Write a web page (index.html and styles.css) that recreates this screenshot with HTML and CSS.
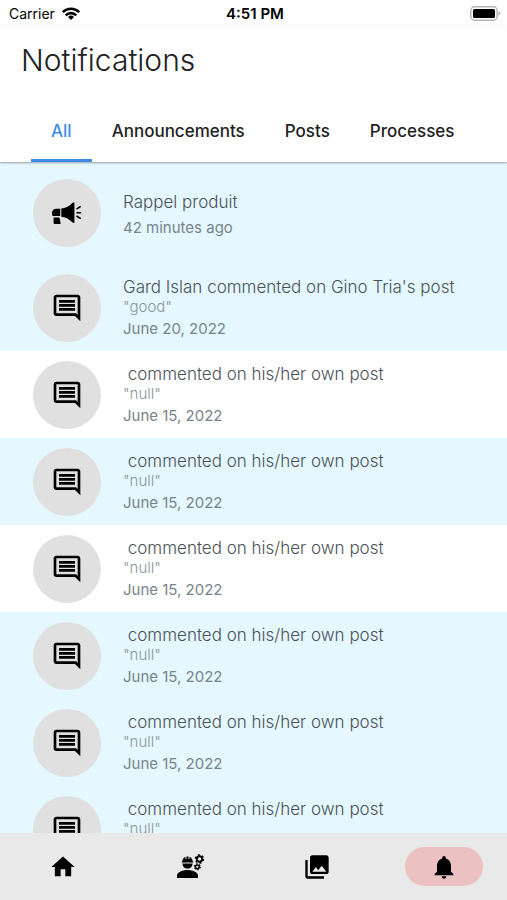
FILE: index.html
```html
<!DOCTYPE html>
<html lang="en">
<head>
<meta charset="utf-8">
<meta name="viewport" content="width=device-width, initial-scale=1">
<title>Notifications</title>
<link rel="stylesheet" href="styles.css">
</head>
<body>
<svg class="sprite" aria-hidden="true">
  <symbol id="comment" viewBox="0 0 24 24">
    <path d="M21.99 4c0-1.100-.89-2-1.990-2H4c-1.100 0-2 .9-2 2v12c0 1.100.9 2 2 2h14l4 4-.01-18zM20 4v13.170L18.830 16H4V4h16zM6 12h12v2H6zm0-3h12v2H6zm0-3h12v2H6z"/>
  </symbol>
</svg>
<div class="status">
  <div class="status-side">
    <span>Carrier</span>
    <svg class="wifi" viewBox="0 0 18 13" aria-hidden="true">
      <g fill="none" stroke="#000" stroke-width="2.600"><path d="M.8 5.200a11.600 11.600 0 0 1 16.400 0"/><path d="M3.700 8.300a7.500 7.500 0 0 1 10.600 0"/></g>
      <path d="M9 13 6 10a4.300 4.300 0 0 1 6 0z"/>
    </svg>
  </div>
  <span class="time">4:51 PM</span>
  <div class="status-side status-end">
    <svg class="battery" viewBox="0 0 31 15" aria-hidden="true">
      <rect x=".8" y=".8" width="26.400" height="13.400" rx="4" fill="#fff" stroke="#b5b5b5" stroke-width="1.500"/>
      <rect x="3" y="3" width="22" height="9" rx="1.500"/>
      <path d="M28.500 5.500q2 .5 2 2t-2 2z" fill="#b5b5b5"/>
    </svg>
  </div>
</div>
<header class="header">
  <h1>Notifications</h1>
  <div class="tabs" role="tablist">
    <button class="tab active" role="tab" aria-selected="true">All</button>
    <button class="tab" role="tab" aria-selected="false">Announcements</button>
    <button class="tab" role="tab" aria-selected="false">Posts</button>
    <button class="tab" role="tab" aria-selected="false">Processes</button>
  </div>
</header>
<main class="list">
  <article class="item unread announcement">
    <div class="avatar"><svg class="megaphone" viewBox="0 0 30 24" aria-hidden="true">
      <path d="M8.200 7.700v7.200H1.300C.5 14.900 0 14.300 0 13.500v-1.600c0-2.500 1.700-4.200 4.200-4.200zM9.300 7.600c4-.4 7.500-2 10.700-5.400q.4-.7 1.300-.7h1.100v20.200h-1.100q-.9 0-1.300-.7c-3.200-3.300-6.700-4.900-10.700-5.300zM1.600 16.500h5.200c.5 0 .8.4.9.9l1 5.600H2.900c-.8 0-1.300-.5-1.300-1.300z"/>
      <path d="m24.500 8.200 4.200-2.800M24.500 11.700h4.700M24.500 15l4.200 2.700" fill="none" stroke="#000" stroke-width="1.600"/>
    </svg></div>
    <div class="text"><h2>Rappel produit</h2><time>42 minutes ago</time></div>
  </article>
  <article class="item unread">
    <div class="avatar"><svg class="comment"><use href="#comment"/></svg></div>
    <div class="text"><h2>Gard Islan commented on Gino Tria's post</h2><p>"good"</p><time>June 20, 2022</time></div>
  </article>
  <article class="item">
    <div class="avatar"><svg class="comment"><use href="#comment"/></svg></div>
    <div class="text"><h2> commented on his/her own post</h2><p>"null"</p><time>June 15, 2022</time></div>
  </article>
  <article class="item unread">
    <div class="avatar"><svg class="comment"><use href="#comment"/></svg></div>
    <div class="text"><h2> commented on his/her own post</h2><p>"null"</p><time>June 15, 2022</time></div>
  </article>
  <article class="item">
    <div class="avatar"><svg class="comment"><use href="#comment"/></svg></div>
    <div class="text"><h2> commented on his/her own post</h2><p>"null"</p><time>June 15, 2022</time></div>
  </article>
  <article class="item unread">
    <div class="avatar"><svg class="comment"><use href="#comment"/></svg></div>
    <div class="text"><h2> commented on his/her own post</h2><p>"null"</p><time>June 15, 2022</time></div>
  </article>
  <article class="item unread">
    <div class="avatar"><svg class="comment"><use href="#comment"/></svg></div>
    <div class="text"><h2> commented on his/her own post</h2><p>"null"</p><time>June 15, 2022</time></div>
  </article>
  <article class="item unread">
    <div class="avatar"><svg class="comment"><use href="#comment"/></svg></div>
    <div class="text"><h2> commented on his/her own post</h2><p>"null"</p></div>
  </article>
</main>
<nav class="nav">
  <a href="#home" aria-label="Home"><svg class="nav-icon" viewBox="0 0 24 24"><path d="M10 20v-6h4v6h5v-8h3L12 3 2 12h3v8z"/></svg></a>
  <a href="#team" aria-label="Team"><svg class="nav-icon" viewBox="0 0 28 28">
    <path d="M1 25v-2.500c0-3.300 6-5.500 10.500-5.500S22 19.200 22 22.500V25zM6.500 10.500h10c0 3-2 5-5 5s-5-2-5-5zM5.700 9.500V8.600h.6c.1-2.200 1.300-4 3.200-4.800V6h1V3.400h2V6h1V3.800c1.900.8 3.100 2.600 3.200 4.800h.6v.9z"/>
    <g fill="none" stroke="#000"><circle cx="23.500" cy="6" r="2.700" stroke-width="1.900"/><circle cx="23.500" cy="6" r="4" stroke-width="1.500" stroke-dasharray="2 2.190"/><circle cx="21.300" cy="13.800" r="1.900" stroke-width="1.500"/><circle cx="21.300" cy="13.800" r="2.900" stroke-width="1.200" stroke-dasharray="1.500 1.540"/></g>
  </svg></a>
  <a href="#gallery" aria-label="Gallery"><svg class="nav-icon" viewBox="0 0 24 24"><path d="M22 16V4c0-1.100-.9-2-2-2H8c-1.100 0-2 .9-2 2v12c0 1.100.9 2 2 2h12c1.100 0 2-.9 2-2zm-11-4 2.030 2.710L16 11l4 5H8zM2 6v14c0 1.100.9 2 2 2h14v-2H4V6z"/></svg></a>
  <a href="#notifications" aria-label="Notifications" aria-current="page"><span class="pill"><svg class="nav-icon" viewBox="0 0 24 24"><path d="M12 22c1.100 0 2-.9 2-2h-4c0 1.100.9 2 2 2zm6-6v-5c0-3.070-1.630-5.640-4.500-6.320V4c0-.83-.67-1.500-1.500-1.500s-1.500.67-1.500 1.500v.68C7.640 5.360 6 7.920 6 11v5l-2 2v1h16v-1z"/></svg></span></a>
</nav>
</body>
</html>
```
FILE: styles.css
```css
* {
  box-sizing: border-box;
}

body {
  margin: 0;
  height: 100vh;
  display: flex;
  flex-direction: column;
  overflow: hidden;
  background: #fff;
  color: #222;
  font-family: Inter, "Liberation Sans", sans-serif;
}

h1,
h2,
p {
  margin: 0;
}

svg {
  display: block;
}

.sprite {
  position: absolute;
  width: 0;
  height: 0;
}

.status {
  display: flex;
  align-items: center;
  height: 26px;
  padding: 0 6px 0 9px;
  color: #000;
  font-size: 14px;
}

.status-side {
  flex: 1;
  display: flex;
  align-items: center;
  gap: 7px;
}

.status-end {
  justify-content: flex-end;
}

.time {
  font-size: 15px;
  font-weight: 600;
}

.wifi {
  width: 18px;
  height: 13px;
}

.battery {
  width: 31px;
  height: 15px;
}

.header {
  position: relative;
  z-index: 1;
  background: #fff;
  box-shadow: 0 1px 2px rgba(0, 0, 0, 0.35);
}

h1 {
  padding: 14px 21px 0;
  font-size: 30px;
  line-height: 40px;
  font-weight: 300;
}

.tabs {
  display: flex;
  margin-top: 20px;
  padding: 0 31px;
}

.tab {
  height: 62px;
  padding: 3px 20px 0;
  border: 0;
  border-bottom: 3px solid transparent;
  background: none;
  color: #222;
  font: 500 17px/20px Inter, "Liberation Sans", sans-serif;
}

.tab.active {
  border-color: #3c8ce7;
  color: #3c8ce7;
}

.list {
  flex: 1;
  min-height: 0;
  overflow-y: auto;
  scrollbar-width: none;
}

.item {
  display: flex;
  align-items: center;
  gap: 22px;
  height: 87px;
  padding: 0 33px;
}

.unread {
  background: #e5f7ff;
}

.announcement {
  height: 102px;
}

.avatar {
  flex: none;
  display: grid;
  place-items: center;
  width: 68px;
  height: 68px;
  border-radius: 50%;
  background: #e0e0e0;
}

.megaphone {
  width: 30px;
  height: 24px;
}

.comment {
  width: 32px;
  height: 32px;
}

.text {
  height: 66px;
}

.announcement .text {
  height: 46px;
}

h2 {
  color: #4a5257;
  font-size: 17px;
  line-height: 24px;
  font-weight: 300;
  white-space: pre-wrap;
}

p {
  color: #8b959b;
  font-size: 15px;
  line-height: 16px;
  font-weight: 300;
}

time {
  display: block;
  color: #78838a;
  font-size: 15px;
  line-height: 28px;
}

.nav {
  display: flex;
  height: 67px;
  background: #e9e9e9;
}

.nav a {
  flex: 1;
  display: grid;
  place-items: center;
}

.nav-icon {
  width: 28px;
  height: 28px;
}

.pill {
  display: grid;
  place-items: center;
  width: 78px;
  height: 39px;
  border-radius: 20px;
  background: #ecc1c1;
}
```
